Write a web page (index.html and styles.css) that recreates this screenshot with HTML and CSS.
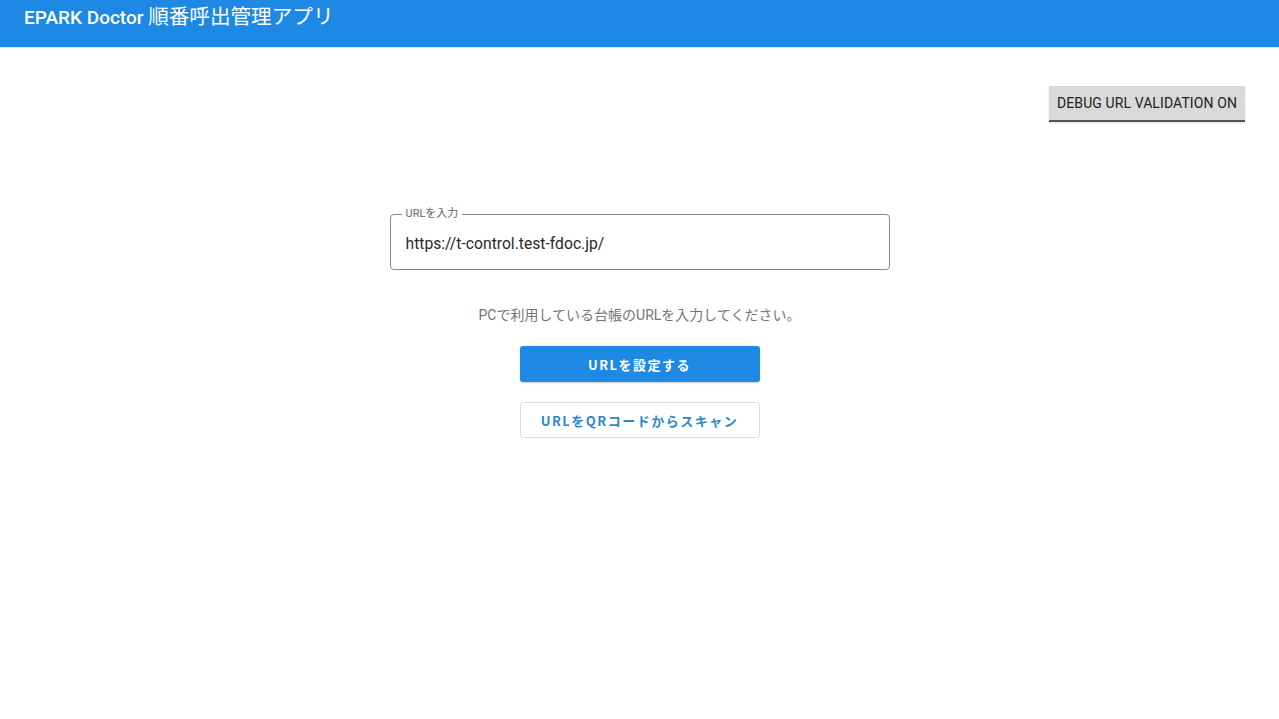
FILE: index.html
```html
<!DOCTYPE html>
<html lang="ja">
<head>
    <meta charset="UTF-8">
    <meta name="viewport" content="width=device-width, initial-scale=1.0">
    <title>EPARK Doctor 順番呼出管理アプリ</title>
    <link rel="stylesheet" href="styles.css">
</head>
<body>
    <header class="app-bar">
        <h1 class="app-title">EPARK Doctor <span class="app-title-ja">順番呼出管理アプリ</span></h1>
    </header>

    <main class="content">
        <div class="debug-row">
            <button class="debug-button">Debug URL Validation On</button>
        </div>

        <div class="form">
            <fieldset class="url-field">
                <legend class="url-label">URLを入力</legend>
                <input class="url-input" type="text" value="https://t-control.test-fdoc.jp/">
            </fieldset>

            <p class="helper-text">PCで利用している台帳のURLを入力してください。</p>

            <button class="primary-button">URLを設定する</button>
            <button class="outline-button">URLをQRコードからスキャン</button>
        </div>
    </main>
</body>
</html>
```

FILE: styles.css
```css
body {
    font-family: Roboto, "Noto Sans CJK JP", sans-serif;
    margin: 0;
    background-color: #fff;
    color: #222;
}
.app-bar {
    background-color: #1e88e5;
    height: 47px;
    border-bottom: 1px solid #cfe3f6;
    padding: 0 24px;
}
.app-title {
    margin: 0;
    padding-top: 5px;
    font-size: 19px;
    font-weight: 500;
    color: #fff;
    line-height: 24px;
}
.app-title-ja {
    font-size: 20.6px;
    font-weight: 400;
}
.content {
    padding: 38px 34px 0;
}
.debug-row {
    display: flex;
    justify-content: flex-end;
}
.debug-button {
    background-color: #d9d9d9;
    border: none;
    border-bottom: 2px solid #555;
    height: 36px;
    padding: 0 8px;
    font-family: Roboto, sans-serif;
    font-size: 14px;
    font-weight: 400;
    letter-spacing: 0.1px;
    text-transform: uppercase;
    color: #222;
    box-shadow: 0 1px 2px rgba(0, 0, 0, 0.15);
}
.form {
    display: flex;
    flex-direction: column;
    align-items: center;
    margin-top: 92px;
}
.url-field {
    width: 500px;
    box-sizing: border-box;
    height: 62px;
    margin: -6px 0 0;
    padding: 0 15px;
    border: 1px solid #8a8a8a;
    border-radius: 4px;
}
.url-label {
    font-size: 11px;
    color: #666;
    padding: 0 4px;
    margin-left: -4px;
    line-height: 12px;
}
.url-input {
    border: none;
    outline: none;
    width: 100%;
    padding: 0;
    margin-top: 14px;
    font-family: Roboto, sans-serif;
    font-size: 15.7px;
    color: #2a2a2a;
    background: transparent;
}
.helper-text {
    margin: 36px 0 0;
    font-size: 14px;
    line-height: 18px;
    color: #757575;
}
.primary-button,
.outline-button {
    width: 240px;
    height: 36px;
    border-radius: 3px;
    font-family: "Noto Sans CJK JP", sans-serif;
    font-size: 13px;
    font-weight: 700;
    letter-spacing: 1.5px;
}
.primary-button {
    margin-top: 22px;
    background-color: #1e88e5;
    color: #fff;
    border: none;
    box-shadow: 0 1px 2px rgba(0, 0, 0, 0.2);
}
.outline-button {
    margin-top: 20px;
    background-color: #fff;
    color: #2b89c8;
    border: 1px solid #ddd;
}
```
